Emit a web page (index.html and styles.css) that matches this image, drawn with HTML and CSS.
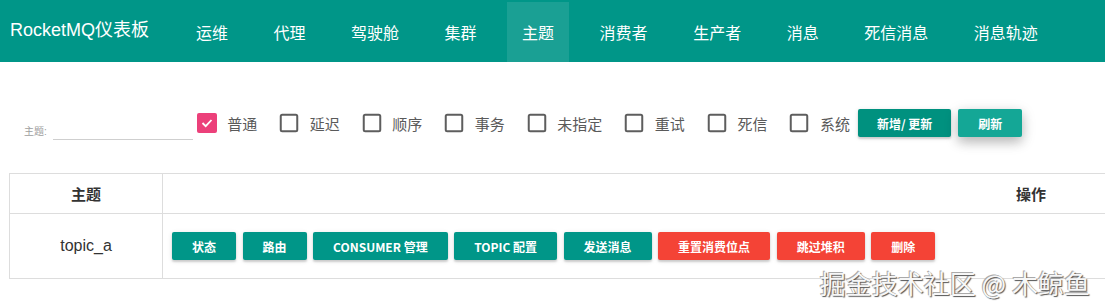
FILE: index.html
```html
<!DOCTYPE html>
<html lang="zh-CN">
<head>
    <meta charset="UTF-8">
    <meta name="viewport" content="width=device-width, initial-scale=1.0">
    <title>RocketMQ仪表板</title>
    <link rel="stylesheet" href="styles.css">
</head>
<body>

    <nav class="navbar">
        <div class="brand">RocketMQ仪表板</div>
        <ul class="nav-menu">
            <li>运维</li>
            <li>代理</li>
            <li>驾驶舱</li>
            <li>集群</li>
            <li class="active">主题</li>
            <li>消费者</li>
            <li>生产者</li>
            <li>消息</li>
            <li>死信消息</li>
            <li>消息轨迹</li>
        </ul>
    </nav>

    <div class="toolbar">
        <div class="search">
            <label>主题:</label>
            <input type="text">
        </div>
        <div class="filters">
            <label class="check">
                <svg class="box" width="20" height="20" viewBox="0 0 20 20"><rect x="0" y="0" width="20" height="20" rx="2" fill="#ec407a"/><polyline points="5.5,10 8.7,13.2 14.5,7" fill="none" stroke="#fff" stroke-width="1.8"/></svg>
                普通
            </label>
            <label class="check">
                <svg class="box" width="20" height="20" viewBox="0 0 20 20"><rect x="1.75" y="1.75" width="16.5" height="16.5" rx="1.5" fill="none" stroke="#5e5e5e" stroke-width="2"/></svg>
                延迟
            </label>
            <label class="check">
                <svg class="box" width="20" height="20" viewBox="0 0 20 20"><rect x="1.75" y="1.75" width="16.5" height="16.5" rx="1.5" fill="none" stroke="#5e5e5e" stroke-width="2"/></svg>
                顺序
            </label>
            <label class="check">
                <svg class="box" width="20" height="20" viewBox="0 0 20 20"><rect x="1.75" y="1.75" width="16.5" height="16.5" rx="1.5" fill="none" stroke="#5e5e5e" stroke-width="2"/></svg>
                事务
            </label>
            <label class="check">
                <svg class="box" width="20" height="20" viewBox="0 0 20 20"><rect x="1.75" y="1.75" width="16.5" height="16.5" rx="1.5" fill="none" stroke="#5e5e5e" stroke-width="2"/></svg>
                未指定
            </label>
            <label class="check">
                <svg class="box" width="20" height="20" viewBox="0 0 20 20"><rect x="1.75" y="1.75" width="16.5" height="16.5" rx="1.5" fill="none" stroke="#5e5e5e" stroke-width="2"/></svg>
                重试
            </label>
            <label class="check">
                <svg class="box" width="20" height="20" viewBox="0 0 20 20"><rect x="1.75" y="1.75" width="16.5" height="16.5" rx="1.5" fill="none" stroke="#5e5e5e" stroke-width="2"/></svg>
                死信
            </label>
            <label class="check">
                <svg class="box" width="20" height="20" viewBox="0 0 20 20"><rect x="1.75" y="1.75" width="16.5" height="16.5" rx="1.5" fill="none" stroke="#5e5e5e" stroke-width="2"/></svg>
                系统
            </label>
        </div>
        <div class="actions">
            <button class="btn btn-dark">新增/ 更新</button>
            <button class="btn btn-raised">刷新</button>
        </div>
    </div>

    <div class="table-wrap">
        <table>
            <thead>
                <tr>
                    <th class="col-topic">主题</th>
                    <th>操作</th>
                </tr>
            </thead>
            <tbody>
                <tr>
                    <td class="topic-name">topic_a</td>
                    <td class="ops">
                        <div class="btn-row">
                            <button class="btn">状态</button>
                            <button class="btn">路由</button>
                            <button class="btn">Consumer 管理</button>
                            <button class="btn">Topic 配置</button>
                            <button class="btn">发送消息</button>
                            <button class="btn btn-red">重置消费位点</button>
                            <button class="btn btn-red">跳过堆积</button>
                            <button class="btn btn-red">删除</button>
                        </div>
                    </td>
                </tr>
            </tbody>
        </table>
    </div>

    <div class="watermark">掘金技术社区 @ 木鲸鱼</div>

</body>
</html>
```

FILE: styles.css
```css
* {
    box-sizing: border-box;
}

body {
    margin: 0;
    font-family: "Liberation Sans", "Noto Sans CJK SC", sans-serif;
    background: #fff;
    overflow: hidden;
}

.navbar {
    display: flex;
    align-items: flex-end;
    height: 62px;
    padding-left: 10px;
    background-color: #009688;
}

.brand {
    align-self: flex-start;
    margin-top: 20px;
    font-size: 18px;
    line-height: 20px;
    color: #fff;
}

.nav-menu {
    display: flex;
    gap: 15.5px;
    list-style: none;
    margin: 0 0 0 32px;
    padding: 0;
}

.nav-menu li {
    height: 60px;
    line-height: 64px;
    padding: 0 15px;
    font-size: 16px;
    color: #fff;
    cursor: pointer;
}

.nav-menu li.active {
    background-color: rgba(255, 255, 255, 0.1);
}

.toolbar {
    display: flex;
    align-items: center;
    height: 28px;
    margin-top: 47px;
    padding-left: 24px;
}

.search {
    display: flex;
    align-items: flex-end;
    height: 28px;
    margin-top: 6px;
}

.search label {
    font-size: 10px;
    line-height: 12px;
    margin-bottom: 2px;
    color: #9e9e9e;
}

.search input {
    width: 140px;
    height: 20px;
    margin-left: 6px;
    border: none;
    border-bottom: 1px solid #cfcfcf;
    outline: none;
    background: transparent;
}

.filters {
    display: flex;
    gap: 22px;
    margin-left: 4px;
}

.check {
    display: flex;
    align-items: center;
    gap: 10.5px;
    font-size: 15px;
    color: #5a5a5a;
    cursor: pointer;
}

.box {
    display: block;
}

.actions {
    display: flex;
    gap: 7px;
    margin-left: 8px;
}

.btn {
    height: 28px;
    padding: 0 20px;
    border: none;
    border-radius: 2px;
    font-family: "Noto Sans CJK SC", sans-serif;
    font-size: 12px;
    font-weight: 700;
    text-transform: uppercase;
    color: #fff;
    background-color: #009688;
    box-shadow: 0 2px 2px rgba(0, 0, 0, 0.14), 0 1px 5px rgba(0, 0, 0, 0.12);
    cursor: pointer;
}

.btn-dark {
    padding: 0 19px;
    background-color: #00917f;
}

.btn-raised {
    background-color: #14a796;
    box-shadow: 0 5px 11px rgba(0, 0, 0, 0.18), 0 4px 15px rgba(0, 0, 0, 0.15);
}

.btn-red {
    background-color: #f44336;
}

.table-wrap {
    margin: 36px 0 0 9px;
    overflow: hidden;
}

table {
    width: 1891px;
    border-collapse: collapse;
}

th, td {
    border: 1px solid #ddd;
}

th {
    height: 40px;
    padding: 0;
    font-family: "Noto Sans CJK SC", sans-serif;
    font-size: 15px;
    font-weight: 700;
    color: #333;
    text-align: center;
}

.col-topic {
    width: 153px;
}

td {
    height: 65px;
}

.topic-name {
    text-align: center;
    font-size: 16px;
    color: #333;
}

.ops {
    padding: 0 0 0 9px;
}

.btn-row {
    display: flex;
    gap: 6.5px;
}

.watermark {
    position: absolute;
    top: 266px;
    right: 15px;
    font-family: "Noto Sans CJK SC", sans-serif;
    font-size: 26px;
    line-height: 34px;
    color: #f7f7f7;
    text-shadow: 1px 1px 1px #555, -1px -1px 0 #aaa;
}
```
